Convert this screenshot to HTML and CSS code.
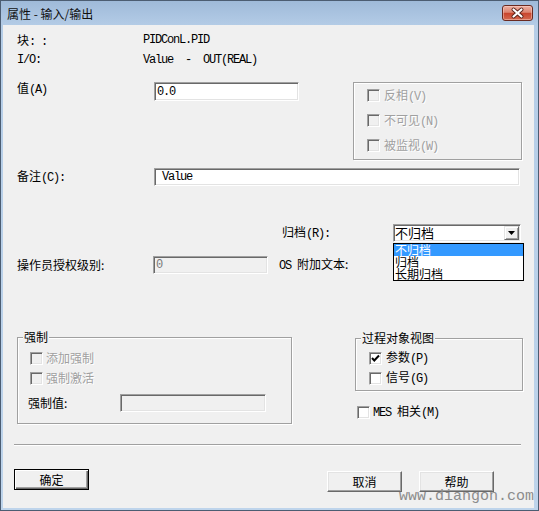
FILE: index.html
```html
<!DOCTYPE html>
<html>
<head>
<meta charset="utf-8">
<title>属性 - 输入/输出</title>
<link rel="stylesheet" href="styles.css">
</head>
<body>
<div class="window">
  <div class="titlebar">
    <span class="title">属性 - 输入/输出</span>
    <span class="close">
      <svg width="29" height="14" viewBox="0 0 29 14">
        <path d="M10.5 3.5 L18.5 10.5 M18.5 3.5 L10.5 10.5" stroke="#5a2219" stroke-width="4" stroke-linecap="round"/>
        <path d="M10.5 3.5 L18.5 10.5 M18.5 3.5 L10.5 10.5" stroke="#fff" stroke-width="2.2" stroke-linecap="round"/>
      </svg>
    </span>
  </div>
  <div class="client">
    <div class="info first"><span class="lbl">块<span class="l">: :</span></span><span class="val l">PIDConL.PID</span></div>
    <div class="info second"><span class="lbl l">I/O:</span><span class="val l">Value  -  OUT(REAL)</span></div>

    <div class="sec1">
      <div class="valrow">
        <span class="lbl-val">值<span class="l">(A)</span></span>
        <div class="edit e-val"><span class="l">0.0</span></div>
      </div>
      <div class="group g-flags">
        <div class="cb dis"><span class="box"></span><span class="ct">反相<span class="l">(V)</span></span></div>
        <div class="cb dis"><span class="box"></span><span class="ct">不可见<span class="l">(N)</span></span></div>
        <div class="cb dis"><span class="box"></span><span class="ct">被监视<span class="l">(W)</span></span></div>
      </div>
    </div>

    <div class="row note">
      <span class="lbl-note">备注<span class="l">(C):</span></span>
      <div class="edit e-note"><span class="l">Value</span></div>
    </div>

    <div class="row arch">
      <span class="lbl-arch">归档<span class="l">(R):</span></span>
      <div class="combo">
        <span class="combo-text">不归档</span>
        <span class="arrow"><svg width="7" height="4" viewBox="0 0 7 4"><path d="M0 0 H7 L3.5 4 Z" fill="#000"/></svg></span>
        <div class="list">
          <div class="item sel">不归档</div>
          <div class="item">归档</div>
          <div class="item">长期归档</div>
        </div>
      </div>
    </div>

    <div class="row oper">
      <span class="lbl-oper">操作员授权级别:</span>
      <div class="edit e-oper disabled"><span class="l">0</span></div>
      <span class="lbl-os"><span class="l">OS </span>附加文本:</span>
    </div>

    <div class="sec2">
      <div class="group g-force">
        <span class="legend">强制</span>
        <div class="cb dis cbf"><span class="box"></span><span class="ct">添加强制</span></div>
        <div class="cb dis cbf"><span class="box"></span><span class="ct">强制激活</span></div>
        <div class="forcerow">
          <span class="lbl-force">强制值:</span>
          <div class="edit e-force disabled"></div>
        </div>
      </div>
      <div class="rightcol">
        <div class="group g-view">
          <span class="legend">过程对象视图</span>
          <div class="cb"><span class="box"><svg width="11" height="11" viewBox="0 0 11 11"><path d="M2 5 L4.3 7.5 L9 2.5" fill="none" stroke="#000" stroke-width="2"/></svg></span><span class="ct">参数<span class="l">(P)</span></span></div>
          <div class="cb"><span class="box"></span><span class="ct">信号<span class="l">(G)</span></span></div>
        </div>
        <div class="cb mes"><span class="box"></span><span class="ct"><span class="l">MES </span>相关<span class="l">(M)</span></span></div>
      </div>
    </div>

    <div class="sep"></div>

    <div class="buttons">
      <div class="btn def">确定</div>
      <div class="btn cancel">取消</div>
      <div class="btn help">帮助</div>
    </div>

    <div class="watermark">www.diangon.com</div>
  </div>
</div>
</body>
</html>
```

FILE: styles.css
```css
* { box-sizing: border-box; }
html, body { margin: 0; padding: 0; background: #fff; }
body {
  font: 12px/14px "Noto Sans CJK SC", "Noto Sans CJK JP", sans-serif;
  color: #000;
}
.l {
  font-family: "Liberation Mono", monospace;
  font-size: 12px;
  letter-spacing: -1.2px;
  white-space: pre;
}

.window {
  width: 539px;
  height: 511px;
  display: flex;
  flex-direction: column;
  border: 1px solid #4c5d72;
  padding: 0 4px 2px 2px;
  background: linear-gradient(#9fbad9, #b5cde7 26px, #bed4eb);
}

.titlebar {
  height: 24px;
  display: flex;
  align-items: flex-start;
  padding-left: 4px;
}
.title {
  margin-top: 6px;
  font-size: 12px;
  line-height: 14px;
  color: #111;
}
.close {
  margin-left: auto;
  margin-right: 1px;
  margin-top: 4px;
  width: 31px;
  height: 16px;
  border: 1px solid #6a2a20;
  border-radius: 3px;
  background: linear-gradient(#eeb0a2, #dc8470 45%, #c9452d 52%, #d46a50);
  box-shadow: inset 0 0 0 1px rgba(255, 220, 210, 0.45);
  display: flex;
  align-items: center;
  justify-content: center;
}
.close svg { display: block; }

.client {
  flex: 1;
  background: #f0f0f0;
  position: relative;
  display: flex;
  flex-direction: column;
  padding-left: 14px;
}

.info { display: flex; height: 14px; }
.info.first { margin-top: 8px; }
.info.second { margin-top: 6px; }
.info .lbl { width: 126px; }

.sec1 { display: flex; height: 78px; margin-top: 15px; }
.valrow { display: flex; align-items: flex-start; }
.lbl-val { width: 137px; line-height: 12px; }

.edit {
  border: 1px solid;
  border-color: #a0a0a0 #fff #fff #a0a0a0;
  box-shadow: inset 1px 1px 0 #696969, inset -1px -1px 0 #e3e3e3;
  background: #fff;
  display: flex;
  align-items: center;
  padding-left: 2px;
}
.edit.disabled { background: #f0f0f0; color: #7a7a7a; }
.e-val { width: 145px; height: 19px; }
.e-note { width: 366px; height: 18px; padding-left: 7px; }
.e-oper { width: 115px; height: 18px; }
.e-force { width: 146px; height: 18px; }

.group {
  border: 1px solid #a0a0a0;
  box-shadow: inset 1px 1px 0 #fff, 1px 1px 0 #fff;
  position: relative;
}
.g-flags {
  margin-left: auto;
  margin-right: 12px;
  width: 169px;
  height: 78px;
  padding-left: 13px;
}
.g-flags .cb { height: 25px; }

.cb { display: flex; align-items: center; height: 20px; }
.box {
  width: 13px;
  height: 13px;
  flex: none;
  border: 1px solid;
  border-color: #a0a0a0 #fff #fff #a0a0a0;
  box-shadow: inset 1px 1px 0 #696969, inset -1px -1px 0 #e3e3e3;
  background: #fff;
  display: flex;
  align-items: center;
  justify-content: center;
}
.box svg { display: block; }
.ct { margin-left: 4px; }
.dis .box { background: #f0f0f0; }
.dis .ct { color: #a0a0a0; text-shadow: 1px 1px 0 #fff; }

.row { display: flex; align-items: center; }
.note { margin-top: 8px; height: 18px; }
.lbl-note { width: 137px; }

.arch { margin-top: 38px; height: 18px; }
.lbl-arch { margin-left: 265px; width: 111px; }
.combo {
  position: relative;
  width: 128px;
  height: 18px;
  border: 1px solid;
  border-color: #a0a0a0 #fff #fff #a0a0a0;
  box-shadow: inset 1px 1px 0 #696969, inset -1px -1px 0 #e3e3e3;
  background: #fff;
  display: flex;
  align-items: center;
}
.combo-text { font-size: 13px; line-height: 14px; margin-left: 1px; }
.arrow {
  position: absolute;
  right: 1px;
  top: 1px;
  width: 15px;
  height: 14px;
  background: #f0f0f0;
  border: 1px solid;
  border-color: #e3e3e3 #696969 #696969 #e3e3e3;
  box-shadow: inset 1px 1px 0 #fff, inset -1px -1px 0 #a0a0a0;
  display: flex;
  align-items: center;
  justify-content: center;
}
.arrow svg { display: block; }
.list {
  position: absolute;
  left: -1px;
  top: 18px;
  width: 131px;
  height: 38px;
  border: 1px solid #000;
  background: #fff;
  z-index: 2;
}
.item {
  height: 12px;
  line-height: 12px;
  font-size: 12px;
  padding-left: 1px;
  white-space: nowrap;
}
.item.sel { background: #3399ff; color: #fff; }

.oper { margin-top: 14px; height: 18px; }
.lbl-oper { width: 136px; }
.lbl-os { margin-left: 11px; }

.sec2 { display: flex; align-items: flex-start; margin-top: 63px; }
.legend {
  position: absolute;
  top: -8px;
  left: 5px;
  padding: 0 1px;
  background: #f0f0f0;
  line-height: 14px;
}
.g-force {
  width: 275px;
  height: 87px;
  padding: 10px 0 0 10px;
}
.cbf { margin-left: 2px; }
.cbf .ct { margin-left: 3px; }
.forcerow { display: flex; align-items: center; height: 18px; margin-top: 6px; }
.lbl-force { width: 92px; }

.rightcol {
  margin-left: auto;
  margin-right: 11px;
  width: 168px;
  margin-top: 1px;
}
.g-view {
  height: 53px;
  padding: 9px 0 0 13px;
}
.mes { margin-top: 14px; margin-left: 2px; height: 14px; }
.mes .ct { margin-left: 3px; }

.sep {
  margin-top: 20px;
  margin-left: -3px;
  width: 507px;
  height: 2px;
  border-top: 1px solid #a0a0a0;
  border-bottom: 1px solid #fff;
}

.buttons { display: flex; align-items: flex-start; margin-top: 23px; }
.btn {
  width: 75px;
  height: 21px;
  background: #f0f0f0;
  border: 1px solid;
  border-color: #fff #696969 #696969 #fff;
  box-shadow: inset -1px -1px 0 #a0a0a0, inset 1px 1px 0 #e3e3e3;
  display: flex;
  align-items: center;
  justify-content: center;
  font-size: 12px;
}
.btn.def {
  margin-left: -3px;
  border: 1px solid #000;
  box-shadow: inset 1px 1px 0 #fff, inset -1px -1px 0 #696969, inset -2px -2px 0 #a0a0a0;
}
.btn.cancel { margin-left: 238px; margin-top: 2px; }
.btn.help { margin-left: 17px; margin-top: 2px; }

.watermark {
  position: absolute;
  left: 396px;
  top: 464px;
  font-family: "Liberation Mono", monospace;
  font-size: 15px;
  line-height: 16px;
  color: #8c8c8c;
  white-space: nowrap;
}
```
